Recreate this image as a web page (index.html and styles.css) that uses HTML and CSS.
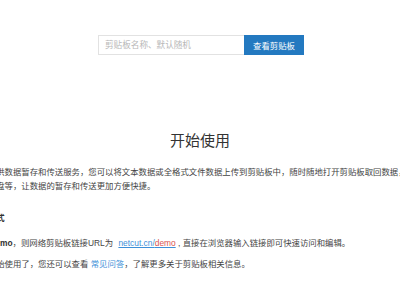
FILE: index.html
```html
<!DOCTYPE html>
<html lang="zh-CN">
<head>
  <meta charset="UTF-8">
  <meta name="viewport" content="width=device-width, initial-scale=1.0">
  <title>网络剪贴板</title>
  <link rel="stylesheet" href="styles.css">
</head>
<body>
  <div class="search-bar">
    <input type="text" class="search-input" placeholder="剪贴板名称、默认随机">
    <button class="search-btn">查看剪贴板</button>
  </div>

  <div class="content">
    <h2 class="title">开始使用</h2>

    <p class="intro">
      网络剪贴板提供数据暂存和传送服务，您可以将文本数据或全格式文件数据上传到剪贴板中，随时随地打开剪贴板取回数据，方便快捷。<br>
      相当于网络硬盘等，让数据的暂存和传送更加方便快捷。
    </p>

    <h4 class="sub-title">剪贴板使用方式</h4>

    <p class="tip">例如名称为 <b>demo</b>，则网络剪贴板链接URL为 <a class="url" href="#">netcut.cn/<span class="url-name">demo</span></a> , 直接在浏览器输入链接即可快速访问和编辑。</p>
    <p class="tip">现在您可以开始使用了，您还可以查看 <a class="faq" href="#">常见问答</a>，了解更多关于剪贴板相关信息。</p>
  </div>
</body>
</html>
```

FILE: styles.css
```css
body {
  margin: 0;
  padding: 0;
  overflow: hidden;
  background: #fff;
  color: #444;
  font-family: "Liberation Sans", "Noto Sans CJK SC", sans-serif;
  font-size: 8.4px;
}

.search-bar {
  display: flex;
  justify-content: center;
  padding-top: 35px;
  padding-left: 2px;
}

.search-input {
  width: 146px;
  height: 20px;
  box-sizing: border-box;
  border: 1px solid #e2e2e2;
  border-right: none;
  padding: 0 6px;
  font-family: inherit;
  font-size: 8.6px;
  color: #555;
  outline: none;
}

.search-input::placeholder {
  color: #b8b8b8;
}

.search-btn {
  width: 60px;
  height: 20px;
  border: none;
  background-color: #2379c0;
  color: #fff;
  font-family: inherit;
  font-size: 8.4px;
  padding: 0;
  cursor: pointer;
}

.content {
  width: 508px;
  margin-left: -54px;
  white-space: nowrap;
}

.title {
  text-align: center;
  font-size: 15px;
  font-weight: normal;
  color: #333;
  line-height: 20px;
  margin: 76px 0 14px;
}

.intro {
  line-height: 14px;
  margin: 0 0 18px;
}

.sub-title {
  font-size: 8.4px;
  line-height: 14px;
  color: #333;
  margin: 0 0 11px;
}

.tip {
  line-height: 14px;
  margin: 0 0 7px;
}

.tip b {
  color: #333;
}

.url {
  color: #3d8fd8;
  margin-left: 3px;
}

.url-name {
  color: #d9534f;
}

.faq {
  color: #3d8fd8;
  text-decoration: none;
}
```
